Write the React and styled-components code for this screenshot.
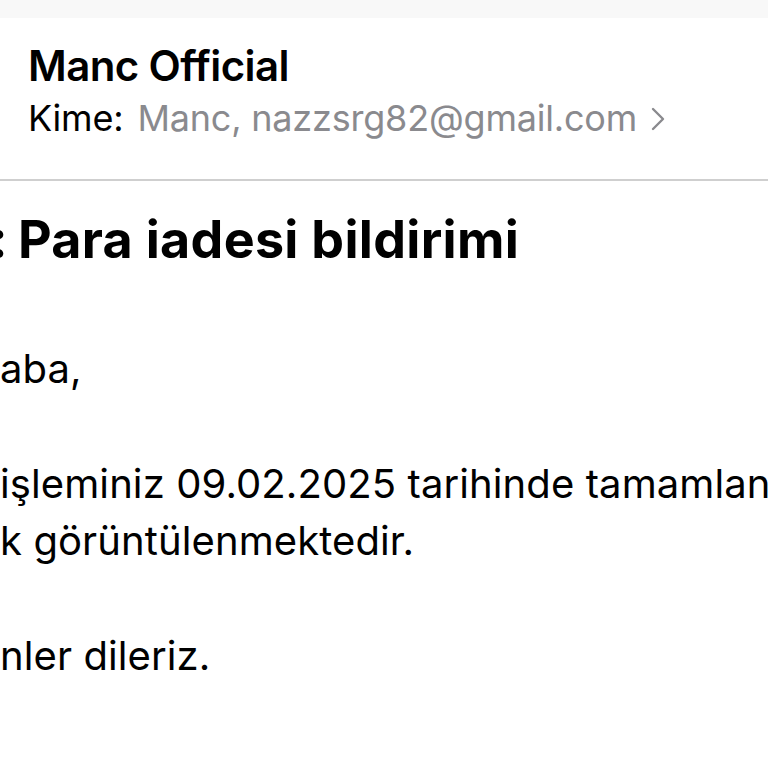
import React from 'react';
import styled, { createGlobalStyle } from 'styled-components';

const GlobalStyle = createGlobalStyle`
  html, body {
    margin: 0;
    padding: 0;
    background: #fff;
  }
  body {
    font-family: Inter, "Noto Sans", "Liberation Sans", sans-serif;
    color: #000;
    -webkit-font-smoothing: antialiased;
  }
`;

const Styled = {
  Page: styled.div`
    width: 768px;
    height: 768px;
    overflow: hidden;
    background: #fff;
  `,
  TopBand: styled.div`
    height: 18px;
    background: #f8f8f8;
  `,
  Header: styled.div`
    padding: 22.7px 0 39px 28px;
    display: flex;
    flex-direction: column;
    gap: 5.2px;
  `,
  Sender: styled.div`
    font-size: 42px;
    line-height: 50px;
    font-weight: 600;
    letter-spacing: -0.6px;
    white-space: nowrap;
  `,
  Recipients: styled.div`
    display: flex;
    align-items: center;
    font-size: 36px;
    line-height: 44px;
    white-space: nowrap;
    letter-spacing: -0.2px;
  `,
  Label: styled.span`
    color: #000;
    margin-right: 14px;
  `,
  Address: styled.span`
    color: #8a8a8e;
  `,
  Chevron: styled.svg`
    margin-left: 14px;
    margin-top: 2px;
  `,
  Divider: styled.hr`
    margin: 0;
    border: 0;
    height: 2px;
    background: #cfcfcf;
  `,
  Subject: styled.h1`
    margin: 28.8px 0 0;
    display: flex;
    font-size: 52px;
    line-height: 60px;
    font-weight: 700;
    letter-spacing: 0.3px;
    white-space: nowrap;
  `,
  Body: styled.div`
    margin-top: 70px;
    font-size: 40px;
    line-height: 57.5px;
    letter-spacing: 0.1px;
  `,
  Line: styled.div`
    display: flex;
    white-space: nowrap;
    min-height: 57.5px;
  `,
  Clip: styled.span`
    display: inline-flex;
    justify-content: flex-end;
    overflow: hidden;
    flex: none;
    width: ${p => p.$w}px;
    margin-right: ${p => p.$gap || 0}px;
  `,
};

const ChevronIcon = () => (
  <Styled.Chevron width="14" height="24" viewBox="0 0 14 24">
    <polyline points="2,2 12,12 2,22" fill="none" stroke="#8a8a8e" strokeWidth="2.4" strokeLinecap="round" strokeLinejoin="round" />
  </Styled.Chevron>
);

const App = () => (
  <Styled.Page>
    <GlobalStyle />
    <Styled.TopBand />
    <Styled.Header>
      <Styled.Sender>Manc Official</Styled.Sender>
      <Styled.Recipients>
        <Styled.Label>Kime:</Styled.Label>
        <Styled.Address>Manc, nazzsrg82@gmail.com</Styled.Address>
        <ChevronIcon />
      </Styled.Recipients>
    </Styled.Header>
    <Styled.Divider />
    <Styled.Subject>
      <Styled.Clip $w={8} $gap={10}>Bilgi:</Styled.Clip>
      Para iadesi bildirimi
    </Styled.Subject>
    <Styled.Body>
      <Styled.Line>
        <Styled.Clip $w={0}>Merh</Styled.Clip>aba,
      </Styled.Line>
      <Styled.Line />
      <Styled.Line>
        <Styled.Clip $w={0}>Para iade </Styled.Clip>işleminiz 09.02.2025 tarihinde tamamlanmış olup hesabınızda
      </Styled.Line>
      <Styled.Line>
        <Styled.Clip $w={0}>iade olara</Styled.Clip>k görüntülenmektedir.
      </Styled.Line>
      <Styled.Line />
      <Styled.Line>
        <Styled.Clip $w={0}>İyi gü</Styled.Clip>nler dileriz.
      </Styled.Line>
    </Styled.Body>
  </Styled.Page>
);

export default App;
